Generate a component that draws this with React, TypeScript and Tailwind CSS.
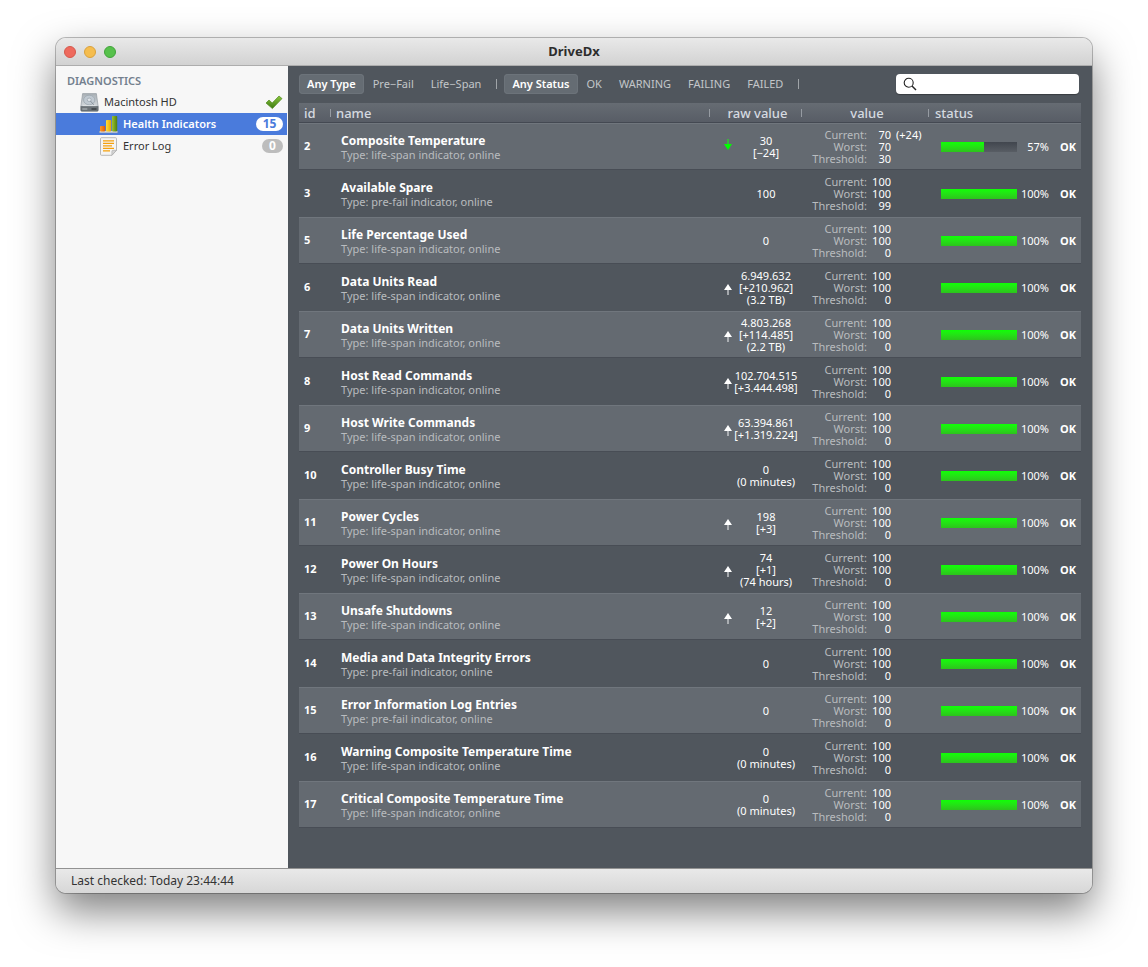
import type { ReactNode } from "react";
import clsx from "clsx";

type Trend = "up" | "down";

type Indicator = {
  id: number;
  name: string;
  kind: "life-span" | "pre-fail";
  raw: string[];
  trend?: Trend;
  current: number;
  delta?: string;
  worst: number;
  threshold: number;
  percent: number;
};

const full = { current: 100, worst: 100, threshold: 0, percent: 100 };

const INDICATORS: Indicator[] = [
  { id: 2, name: "Composite Temperature", kind: "life-span", raw: ["30", "[−24]"], trend: "down", current: 70, delta: "(+24)", worst: 70, threshold: 30, percent: 57 },
  { ...full, id: 3, name: "Available Spare", kind: "pre-fail", raw: ["100"], threshold: 99 },
  { ...full, id: 5, name: "Life Percentage Used", kind: "life-span", raw: ["0"] },
  { ...full, id: 6, name: "Data Units Read", kind: "life-span", raw: ["6.949.632", "[+210.962]", "(3.2 TB)"], trend: "up" },
  { ...full, id: 7, name: "Data Units Written", kind: "life-span", raw: ["4.803.268", "[+114.485]", "(2.2 TB)"], trend: "up" },
  { ...full, id: 8, name: "Host Read Commands", kind: "life-span", raw: ["102.704.515", "[+3.444.498]"], trend: "up" },
  { ...full, id: 9, name: "Host Write Commands", kind: "life-span", raw: ["63.394.861", "[+1.319.224]"], trend: "up" },
  { ...full, id: 10, name: "Controller Busy Time", kind: "life-span", raw: ["0", "(0 minutes)"] },
  { ...full, id: 11, name: "Power Cycles", kind: "life-span", raw: ["198", "[+3]"], trend: "up" },
  { ...full, id: 12, name: "Power On Hours", kind: "life-span", raw: ["74", "[+1]", "(74 hours)"], trend: "up" },
  { ...full, id: 13, name: "Unsafe Shutdowns", kind: "life-span", raw: ["12", "[+2]"], trend: "up" },
  { ...full, id: 14, name: "Media and Data Integrity Errors", kind: "pre-fail", raw: ["0"] },
  { ...full, id: 15, name: "Error Information Log Entries", kind: "pre-fail", raw: ["0"] },
  { ...full, id: 16, name: "Warning Composite Temperature Time", kind: "life-span", raw: ["0", "(0 minutes)"] },
  { ...full, id: 17, name: "Critical Composite Temperature Time", kind: "life-span", raw: ["0", "(0 minutes)"] },
];

function DriveIcon() {
  return (
    <svg width="19" height="19" viewBox="0 0 19 19" aria-hidden="true">
      <defs>
        <linearGradient id="drive" x1="0" y1="0" x2="0" y2="1">
          <stop offset="0" stopColor="#a9b0b6" />
          <stop offset="1" stopColor="#d3d8dc" />
        </linearGradient>
      </defs>
      <path d="M2.6.6h13.8l1.8 13H.8z" fill="url(#drive)" stroke="#8b949b" strokeWidth=".6" />
      <path d="M.8 13.6h17.4v3.6q0 1-1 1H1.8q-1 0-1-1z" fill="#6d7479" stroke="#5b6166" strokeWidth=".6" />
      <ellipse cx="9.2" cy="7" rx="5.6" ry="4.8" fill="#c0c9d1" stroke="#98a3ac" strokeWidth=".7" />
      <ellipse cx="9.2" cy="6.8" rx="2" ry="1.7" fill="#dfe4e8" stroke="#8d99a3" strokeWidth=".6" />
      <path d="M13.8 11.8 10.4 8" stroke="#7d878f" strokeWidth=".8" />
      <path d="M3 12.6h12.6" stroke="#e6e9eb" strokeWidth=".6" />
      <path d="M11.5 16h5" stroke="#3a3f43" strokeWidth="1.4" />
      <path d="M2.3 16h5" stroke="#b9bfc3" strokeWidth="1" />
    </svg>
  );
}

function ChartIcon() {
  return (
    <svg width="19" height="19" viewBox="0 0 19 19" aria-hidden="true">
      <defs>
        <linearGradient id="bar-orange">
          <stop offset="0" stopColor="#ff9a2c" />
          <stop offset="1" stopColor="#e25a00" />
        </linearGradient>
        <linearGradient id="bar-yellow">
          <stop offset="0" stopColor="#ffdf3a" />
          <stop offset="1" stopColor="#eaa400" />
        </linearGradient>
        <linearGradient id="bar-green">
          <stop offset="0" stopColor="#9dc32f" />
          <stop offset="1" stopColor="#4f7f0c" />
        </linearGradient>
      </defs>
      <path d="M.5 16h18v1.8H.5z" fill="#e4e6e8" stroke="#8f969c" strokeWidth=".4" />
      <rect x="1" y="11" width="5.2" height="5.4" rx=".8" fill="url(#bar-orange)" />
      <rect x="7" y="5" width="5.2" height="11.4" rx=".8" fill="url(#bar-yellow)" />
      <rect x="13" y="1" width="5.2" height="15.4" rx=".8" fill="url(#bar-green)" />
    </svg>
  );
}

function LogIcon() {
  return (
    <svg width="19" height="19" viewBox="0 0 19 19" aria-hidden="true">
      <path d="M2.5.7h14q1 0 1 1v11.6l-4.6 5H2.5q-1 0-1-1V1.7q0-1 1-1z" fill="#f4f4f4" stroke="#a9a9a9" strokeWidth=".8" />
      <path d="M17.5 13.3h-3.6q-1 0-1 1v4z" fill="#d5d5d5" stroke="#a9a9a9" strokeWidth=".6" />
      <path d="M4 3.9h11M4 6.4h11M4 8.9h9M4 11.4h11M4 13.9h7" stroke="#f5a10d" strokeWidth="1.3" />
    </svg>
  );
}

function CheckIcon() {
  return (
    <svg width="18" height="15" viewBox="0 0 18 15" role="img" aria-label="Healthy">
      <defs>
        <linearGradient id="check" x1="0" y1="0" x2="0" y2="1">
          <stop offset="0" stopColor="#8cc63f" />
          <stop offset="1" stopColor="#3c7a10" />
        </linearGradient>
      </defs>
      <path d="m1 8 3-3 3.2 3L14 1l3 2.6L7.4 13.6z" fill="url(#check)" stroke="#4f8a1c" strokeWidth=".7" strokeLinejoin="round" />
    </svg>
  );
}

function TrendArrow({ trend }: { trend: Trend }) {
  return trend === "up" ? (
    <svg className="mt-1" width="8" height="11" viewBox="0 0 8 11" role="img" aria-label="Increased">
      <path d="M4 0 8 6H0z" fill="#fff" />
      <path d="M4 6v5" stroke="#c9cccf" strokeWidth="1.4" />
    </svg>
  ) : (
    <svg className="mb-1" width="8" height="11" viewBox="0 0 8 11" role="img" aria-label="Decreased">
      <path d="M4 11 8 5H0z" fill="#0f0" />
      <path d="M4 0v5" stroke="#2fd12f" strokeWidth="1.4" />
    </svg>
  );
}

function FilterButton({ active, children }: { active?: boolean; children: ReactNode }) {
  return (
    <button
      type="button"
      aria-pressed={!!active}
      className={clsx(
        "h-5 rounded-[4px] px-2 text-[11px] leading-4 whitespace-nowrap",
        active ? "bg-[#656c73] font-semibold text-white shadow-[inset_0_0_0_1px_#6c737a]" : "text-[#c3c6c9]"
      )}
    >
      {children}
    </button>
  );
}

function Divider() {
  return <span aria-hidden="true" className="mx-1.5 h-2.5 w-px bg-[#a0a4a8]" />;
}

function HeaderCell({ className, last, children }: { className?: string; last?: boolean; children: ReactNode }) {
  return (
    <th scope="col" className={clsx("p-0 font-medium", className)}>
      <div className="flex items-center">
        <span className="flex-1">{children}</span>
        {!last && <span aria-hidden="true" className="h-2 w-px bg-[#969ba2]" />}
      </div>
    </th>
  );
}

function IndicatorRow({ item, light }: { item: Indicator; light: boolean }) {
  const readings = [
    { label: "Current:", value: item.current, extra: item.delta },
    { label: "Worst:", value: item.worst },
    { label: "Threshold:", value: item.threshold },
  ];

  return (
    <tr
      className={clsx(
        "h-[47px]",
        light
          ? "bg-[#646a71] shadow-[inset_0_-1px_0_#484d55,inset_0_1px_0_#70767d]"
          : "bg-[#50565d]"
      )}
    >
      <td className="p-0 pl-[5px] text-[11px] font-bold">{item.id}</td>
      <td className="p-0 pt-px pl-[10px] whitespace-nowrap">
        <div className="text-[12px] leading-[14px] font-bold">{item.name}</div>
        <div className="text-[11px] leading-[13px] text-[#b9bcbf]">Type: {item.kind} indicator, online</div>
      </td>
      <td className="p-0 pr-0.5 pl-[14px]">
        <div className="flex items-center">
          <span className="w-2 shrink-0">{item.trend && <TrendArrow trend={item.trend} />}</span>
          <div className="flex-1 text-center text-[11px] leading-3 whitespace-nowrap">
            {item.raw.map((line) => (
              <div key={line}>{line}</div>
            ))}
          </div>
        </div>
      </td>
      <td className="p-0">
        <dl className="text-[11px] leading-3">
          {readings.map((r) => (
            <div key={r.label} className="flex">
              <dt className="w-[65px] text-right text-[#b9bcbf]">{r.label}</dt>
              <dd className="w-6 text-right">{r.value}</dd>
              {r.extra && <dd className="pl-[5px]">{r.extra}</dd>}
            </div>
          ))}
        </dl>
      </td>
      <td className="p-0 pr-[5px] pl-3">
        <div className="flex items-center text-[11px] leading-3">
          <div
            role="progressbar"
            aria-label={item.name}
            aria-valuenow={item.percent}
            className="h-2.5 w-[76px] bg-linear-to-b from-[#41464e] to-[#585d64]"
          >
            <div className="h-full bg-linear-to-b from-[#0dff05] to-[#2cc31c]" style={{ width: `${item.percent}%` }} />
          </div>
          <span className="w-8 text-right">{item.percent}%</span>
          <span className="ml-auto font-bold">OK</span>
        </div>
      </td>
    </tr>
  );
}

function Sidebar() {
  return (
    <nav aria-label="Diagnostics" className="w-[232px] shrink-0 bg-[#f7f7f7] pt-1 pr-px text-[11px] text-[#333]">
      <h2 className="pl-[11px] leading-[21px] font-semibold text-[#73808e]">DIAGNOSTICS</h2>
      <ul>
        <li>
          <a href="#drive" className="flex h-[22px] items-center gap-[5px] pr-1 pl-6">
            <DriveIcon />
            <span className="flex-1">Macintosh HD</span>
            <CheckIcon />
          </a>
        </li>
        <li>
          <a
            href="#indicators"
            aria-current="page"
            className="flex h-[22px] items-center gap-[5px] bg-[#4a7bdc] pr-1 pl-[43px] font-semibold text-white"
          >
            <ChartIcon />
            <span className="flex-1">Health Indicators</span>
            <span className="h-3.5 w-[27px] rounded-full bg-white text-center text-[12px] leading-[14px] font-bold text-[#4a7bdc]">
              15
            </span>
          </a>
        </li>
        <li>
          <a href="#log" className="flex h-[22px] items-center gap-[5px] pr-1 pl-[43px]">
            <LogIcon />
            <span className="flex-1">Error Log</span>
            <span className="h-3.5 w-[21px] rounded-full bg-[#bdbdbd] text-center text-[12px] leading-[14px] font-bold text-white">
              0
            </span>
          </a>
        </li>
      </ul>
    </nav>
  );
}

export default function App() {
  return (
    <div className="flex min-h-screen bg-white px-14 pt-[38px] pb-[74px] font-['Noto_Sans','Lucida_Grande',sans-serif]">
      <div className="flex min-w-0 flex-1 flex-col overflow-hidden rounded-[10px] shadow-[0_0_0_1px_rgba(0,0,0,0.25),0_18px_40px_rgba(0,0,0,0.5)]">
        <header className="flex h-7 items-center border-b border-[#adadad] bg-linear-to-b from-[#e9e9e9] to-[#d2d2d2]">
          <div className="flex w-[120px] gap-2 pl-2">
            <button type="button" aria-label="Close" className="size-3 rounded-full border border-[#d5584c] bg-[#ee6a5e]" />
            <button type="button" aria-label="Minimize" className="size-3 rounded-full border border-[#d9a13c] bg-[#f5bd4f]" />
            <button type="button" aria-label="Zoom" className="size-3 rounded-full border border-[#41a33b] bg-[#57c14c]" />
          </div>
          <h1 className="flex-1 text-center text-[13px] font-bold text-[#2d2d2d]">DriveDx</h1>
          <div className="w-[120px]" />
        </header>

        <div className="flex flex-1">
          <Sidebar />
          <main className="min-w-0 flex-1 bg-[#50565d] px-[11px] text-white">
            <div className="flex h-[37px] items-center gap-px pr-0.5 pb-px">
              <FilterButton active>Any Type</FilterButton>
              <FilterButton>Pre−Fail</FilterButton>
              <FilterButton>Life−Span</FilterButton>
              <Divider />
              <FilterButton active>Any Status</FilterButton>
              <FilterButton>OK</FilterButton>
              <FilterButton>WARNING</FilterButton>
              <FilterButton>FAILING</FilterButton>
              <FilterButton>FAILED</FilterButton>
              <Divider />
              <label className="ml-auto flex h-5 w-[183px] items-center rounded-[4px] bg-white pl-[7px] shadow-[0_1px_1px_rgba(0,0,0,0.3)]">
                <svg width="14" height="14" viewBox="0 0 14 14" fill="none" stroke="#222" aria-hidden="true">
                  <circle cx="5.7" cy="5.7" r="4.5" strokeWidth="1.1" />
                  <path d="m9 9 4 4" strokeWidth="1.4" />
                </svg>
                <input type="search" aria-label="Search" className="min-w-0 flex-1 bg-transparent px-1 text-[11px] text-black outline-none" />
              </label>
            </div>

            <table className="w-full table-fixed border-separate border-spacing-0">
              <thead>
                <tr className="h-5 bg-linear-to-b from-[#666c73] to-[#575c65] text-[13px] leading-4 text-[#d5dae0] shadow-[inset_0_-1px_0_#444952]">
                  <HeaderCell className="w-8 pl-[5px] text-left">id</HeaderCell>
                  <HeaderCell className="pl-[5px] text-left">name</HeaderCell>
                  <HeaderCell className="w-[92px] pl-1 text-center">raw value</HeaderCell>
                  <HeaderCell className="w-[127px] pl-1 text-center">value</HeaderCell>
                  <HeaderCell last className="w-[152px] pl-[6px] text-left">
                    status
                  </HeaderCell>
                </tr>
              </thead>
              <tbody>
                {INDICATORS.map((item, i) => (
                  <IndicatorRow key={item.id} item={item} light={i % 2 === 0} />
                ))}
              </tbody>
            </table>
          </main>
        </div>

        <footer className="h-[25px] border-t border-[#929292] bg-linear-to-b from-[#e9e9e9] to-[#d7d7d7] pl-[15px] text-[12px] leading-6 text-[#333]">
          Last checked: Today 23:44:44
        </footer>
      </div>
    </div>
  );
}
